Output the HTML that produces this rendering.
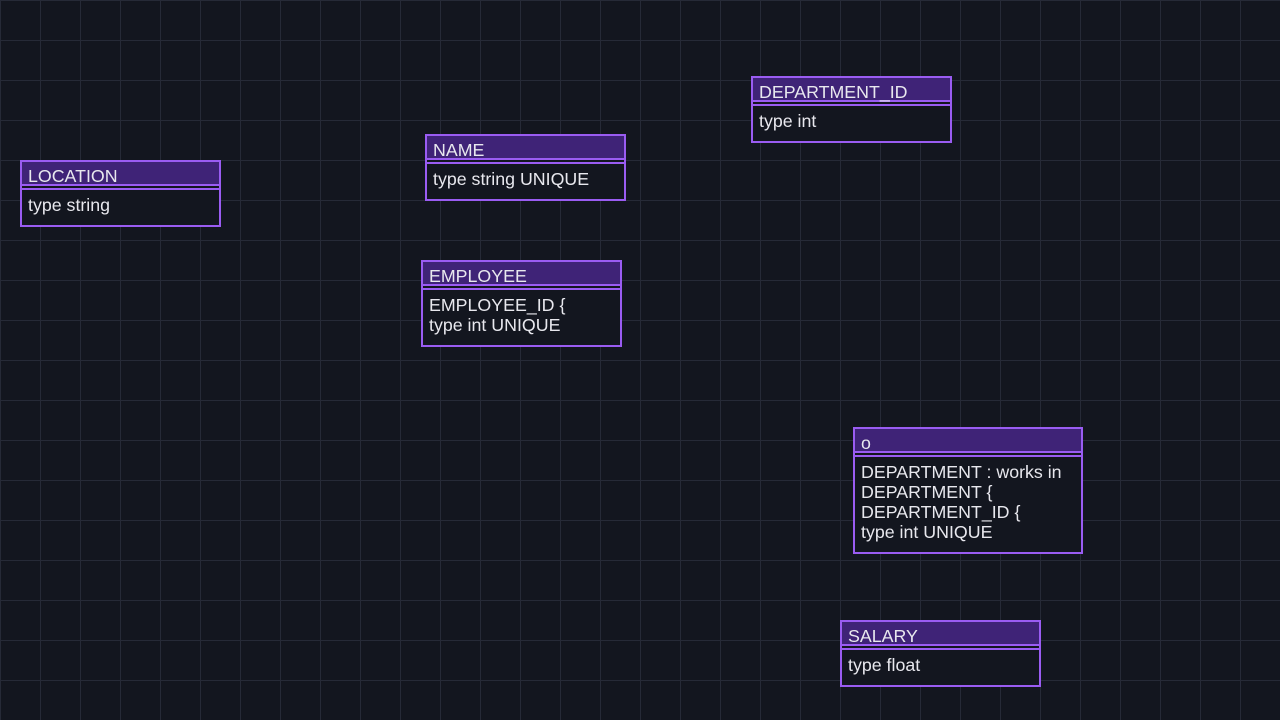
<!DOCTYPE html><html><head><style>
body{margin:0;width:1280px;height:720px;overflow:hidden;background-color:#13161f;
background-image:linear-gradient(#262a37 1px,transparent 1px),linear-gradient(90deg,#262a37 1px,transparent 1px);background-size:40px 40px;background-position:0 0;
font-family:"Liberation Sans",sans-serif;color:#e8e8ee;font-size:17.8px}
.b{position:absolute;border:2px solid #9a5cf2;box-sizing:border-box;background:#13161f}
.h{background:#3f2377;height:22px;border-bottom:2px solid #9a5cf2;padding:0 6px;line-height:28px;white-space:nowrap;overflow:visible}
.d{border-top:2px solid #9a5cf2;margin-top:2px;padding:5px 6px 0;line-height:20px;white-space:nowrap}
</style></head><body>
<div class="b" style="left:20px;top:160px;width:201px;height:67px"><div class="h">LOCATION</div><div class="d">type string</div></div>
<div class="b" style="left:425px;top:134px;width:201px;height:67px"><div class="h">NAME</div><div class="d">type string UNIQUE</div></div>
<div class="b" style="left:751px;top:76px;width:201px;height:67px"><div class="h">DEPARTMENT_ID</div><div class="d">type int</div></div>
<div class="b" style="left:421px;top:260px;width:201px;height:87px"><div class="h">EMPLOYEE</div><div class="d">EMPLOYEE_ID {<br>type int UNIQUE</div></div>
<div class="b" style="left:853px;top:427px;width:230px;height:127px"><div class="h">o</div><div class="d">DEPARTMENT : works in<br>DEPARTMENT {<br>DEPARTMENT_ID {<br>type int UNIQUE</div></div>
<div class="b" style="left:840px;top:620px;width:201px;height:67px"><div class="h">SALARY</div><div class="d">type float</div></div>
</body></html>
